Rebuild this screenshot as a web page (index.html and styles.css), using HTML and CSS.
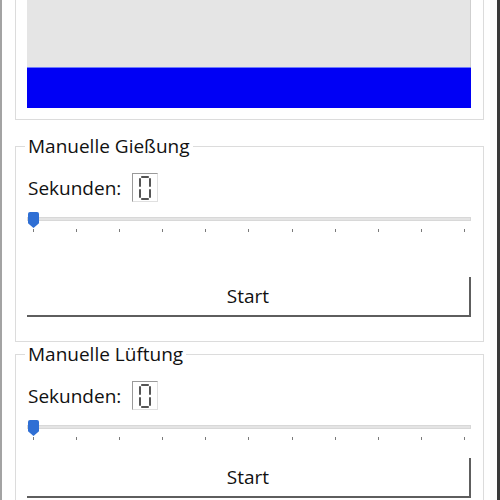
FILE: index.html
```html
<!DOCTYPE html>
<html lang="de">
<head>
<meta charset="utf-8">
<title>Steuerung</title>
<link rel="stylesheet" href="styles.css">
</head>
<body>
<div class="window">
  <div class="group group-top">
    <div class="level">
      <div class="level-fill" style="height: 34%"></div>
    </div>
  </div>

  <fieldset class="group group-water">
    <legend class="group-title">Manuelle Gießung</legend>
    <div class="row">
      <span class="label">Sekunden:</span>
      <span class="lcd">
        <svg class="digit" width="12" height="24" viewBox="0 0 12 24">
          <g stroke="#2a2a2a" stroke-width="1.6" stroke-linecap="butt" fill="none">
            <line x1="2.2" y1="1" x2="9.8" y2="1"/>
            <line x1="1" y1="2.2" x2="1" y2="10.8"/>
            <line x1="11" y1="2.2" x2="11" y2="10.8"/>
            <line x1="1" y1="13.2" x2="1" y2="21.8"/>
            <line x1="11" y1="13.2" x2="11" y2="21.8"/>
            <line x1="2.2" y1="23" x2="9.8" y2="23"/>
          </g>
        </svg>
      </span>
    </div>
    <div class="slider">
      <div class="track"></div>
      <div class="thumb"></div>
      <div class="ticks">
        <i></i><i></i><i></i><i></i><i></i><i></i><i></i><i></i><i></i><i></i><i></i>
      </div>
    </div>
    <button class="btn btn-water">Start</button>
  </fieldset>

  <fieldset class="group group-air">
    <legend class="group-title">Manuelle Lüftung</legend>
    <div class="row">
      <span class="label">Sekunden:</span>
      <span class="lcd">
        <svg class="digit" width="12" height="24" viewBox="0 0 12 24">
          <g stroke="#2a2a2a" stroke-width="1.6" stroke-linecap="butt" fill="none">
            <line x1="2.2" y1="1" x2="9.8" y2="1"/>
            <line x1="1" y1="2.2" x2="1" y2="10.8"/>
            <line x1="11" y1="2.2" x2="11" y2="10.8"/>
            <line x1="1" y1="13.2" x2="1" y2="21.8"/>
            <line x1="11" y1="13.2" x2="11" y2="21.8"/>
            <line x1="2.2" y1="23" x2="9.8" y2="23"/>
          </g>
        </svg>
      </span>
    </div>
    <div class="slider">
      <div class="track"></div>
      <div class="thumb"></div>
      <div class="ticks">
        <i></i><i></i><i></i><i></i><i></i><i></i><i></i><i></i><i></i><i></i><i></i>
      </div>
    </div>
    <button class="btn btn-air">Start</button>
  </fieldset>
</div>
</body>
</html>
```

FILE: styles.css
```css
html, body {
  margin: 0;
  padding: 0;
  background: #ffffff;
}

body {
  font-family: "Open Sans", "Noto Sans", sans-serif;
  font-size: 19px;
  color: #111111;
}

.window {
  width: 500px;
  height: 500px;
  box-sizing: border-box;
  border-left: 2px solid #a3a3a3;
  border-right: 3px solid #3a3a3a;
  padding: 0 13px;
  overflow: hidden;
  background: #ffffff;
}

.group {
  border: 1px solid #dcdcdc;
  margin: 0;
  padding: 0 12px 0 11px;
  min-width: 0;
}

.group-top {
  margin-top: -32px;
  padding-top: 21px;
  padding-bottom: 11px;
}

.level {
  height: 118px;
  background: #e5e5e5;
  display: flex;
  flex-direction: column;
  justify-content: flex-end;
  border-right: 1px solid #cfcfcf;
  box-sizing: border-box;
}

.level-fill {
  background: #0000f5;
  border-top: 1px solid #6f7bff;
  margin-right: -1px;
}

.group-water {
  margin-top: 16px;
  padding-bottom: 24px;
}

.group-air {
  margin-top: 2px;
  padding-bottom: 20px;
}

.group-title {
  margin-left: -2px;
  padding: 0 3px;
  line-height: 20px;
  height: 20px;
}

.row {
  display: flex;
  align-items: center;
  margin-top: 17px;
  height: 29px;
}

.label {
  padding-left: 1px;
  margin-right: 11px;
}

.lcd {
  width: 26px;
  height: 29px;
  box-sizing: border-box;
  border: 1px solid;
  border-color: #9a9a9a #e0e0e0 #e0e0e0 #9a9a9a;
  display: flex;
  align-items: center;
  justify-content: center;
  background: #ffffff;
}

.digit {
  display: block;
}

.slider {
  position: relative;
  height: 20px;
  margin-top: 10px;
}

.track {
  position: absolute;
  left: 0;
  right: 0;
  top: 5px;
  height: 4px;
  background: #e4e4e4;
  border: 1px solid #d8d8d8;
  box-sizing: border-box;
}

.thumb {
  position: absolute;
  left: 1px;
  top: 0;
  width: 11px;
  height: 16px;
  background: #2f6fd4;
  border-radius: 2px 2px 0 0;
  clip-path: polygon(0 0, 100% 0, 100% 70%, 50% 100%, 0 70%);
}

.ticks {
  position: absolute;
  left: 6px;
  right: 6px;
  top: 17px;
  display: flex;
  justify-content: space-between;
}

.ticks i {
  display: block;
  width: 1px;
  height: 3px;
  background: #7a7a7a;
}

.btn {
  display: block;
  width: 100%;
  height: 40px;
  box-sizing: border-box;
  margin: 0;
  padding: 0;
  background: #ffffff;
  border: none;
  border-right: 2px solid #5e5e5e;
  border-bottom: 2px solid #5e5e5e;
  font-family: inherit;
  font-size: 19px;
  color: #111111;
  line-height: 38px;
}

.btn-water {
  margin-top: 45px;
}

.btn-air {
  margin-top: 18px;
}
```
